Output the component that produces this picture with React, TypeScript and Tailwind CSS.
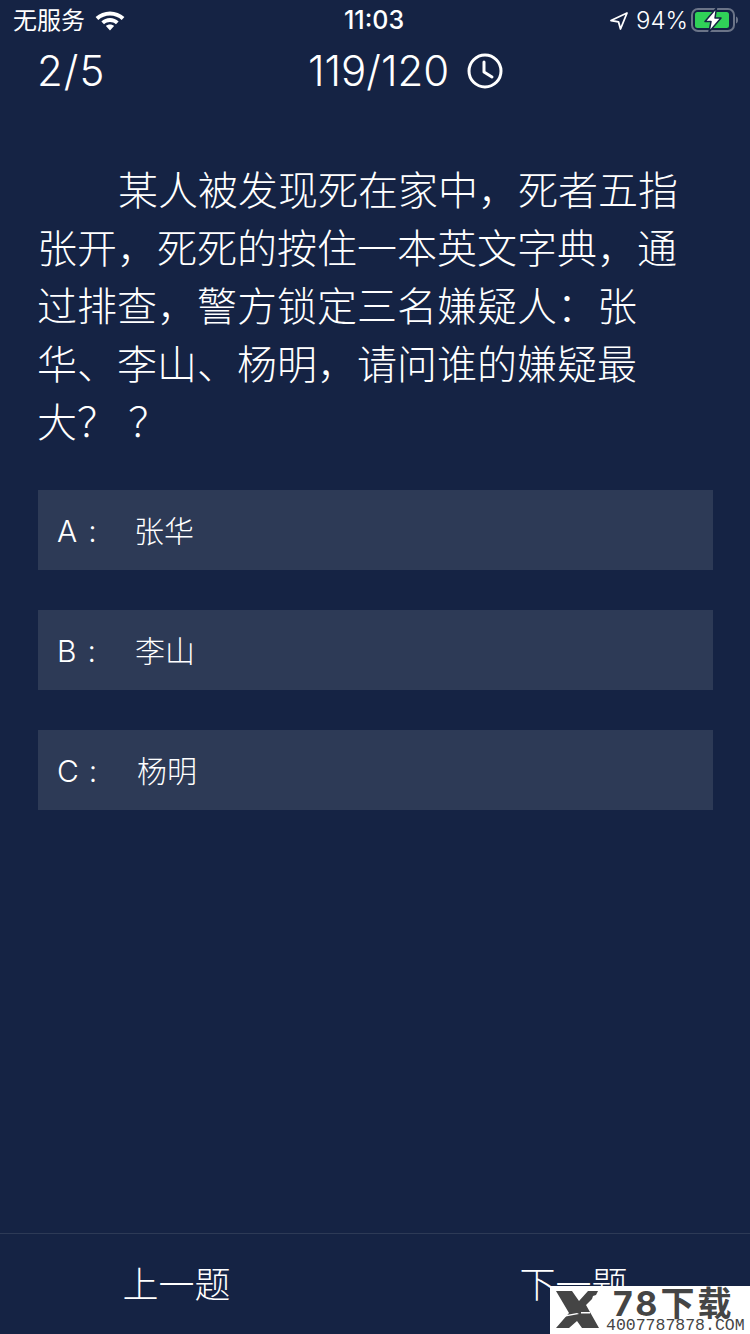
const cjk = "font-['Inter','Noto_Sans_CJK_SC',sans-serif]";

function Wifi() {
  return (
    <svg width="32" height="24" viewBox="0 0 30 22" fill="#fff">
      <path d="M15 2C9.800 2 5.200 4 1.500 7.300L4 10c3-2.700 6.800-4.200 11-4.200s8 1.500 11 4.200l2.500-2.700C24.800 4 20.200 2 15 2z" />
      <path d="M15 8.300c-3.100 0-5.900 1.200-8.100 3.100l2.500 2.700c1.500-1.300 3.500-2.100 5.600-2.100s4.100.8 5.600 2.100l2.500-2.700c-2.200-1.900-5-3.100-8.100-3.100z" />
      <path d="M15 14.200c-1.500 0-2.800.5-3.800 1.400L15 19.800l3.800-4.200c-1-.9-2.300-1.400-3.800-1.400z" />
    </svg>
  );
}

function Battery() {
  return (
    <svg width="48" height="25" viewBox="0 0 48 25">
      <rect x="1" y="1" width="42" height="22" rx="6" fill="none" stroke="#6b7488" strokeWidth="2" />
      <rect x="4" y="4" width="34" height="16" rx="2.500" fill="#30d158" />
      <path d="M45 8.500c1.400.4 2 1.800 2 3.500s-.6 3.100-2 3.500z" fill="#6b7488" />
      <path d="M25.500 0 14 13.500h6L18 24l12-14h-6z" fill="#fff" stroke="#152344" strokeWidth="1.500" strokeLinejoin="round" />
    </svg>
  );
}

function Arrow() {
  return (
    <svg width="20" height="20" viewBox="0 0 20 20" fill="none" stroke="#fff" strokeWidth="1.800" strokeLinejoin="round">
      <path d="M18 2 2 9.500l7.500 1.300L11.500 18z" />
    </svg>
  );
}

function Clock() {
  return (
    <svg width="36" height="36" viewBox="0 0 36 36" fill="none" stroke="#fff" strokeWidth="3" strokeLinecap="round" strokeLinejoin="round">
      <circle cx="18" cy="18" r="16" />
      <path d="M17 9v10l8 5" />
    </svg>
  );
}

function LogoX() {
  return (
    <svg width="44" height="38" viewBox="0 0 44 38" fill="#454545" className="mt-[1px]">
      <path d="M1 0h16l7 10 9-10h10l-2 4-3 1-1 3-6 6 13 23H27l-5-7-8 7H1l13-15z" />
      <path d="M6 25l16-3 2 1-16 3zM26 21h9v1.500h-9z" fill="#fff" />
    </svg>
  );
}

const options = [
  { k: "A", v: "张华", w: "w-[77px]", c: "ml-[11px]" },
  { k: "B", v: "李山", w: "w-[78px]", c: "ml-[11px]" },
  { k: "C", v: "杨明", w: "w-[80px]", c: "ml-[10px]" },
];

export default function App() {
  return (
    <div className={`relative flex h-[1334px] w-[750px] flex-col overflow-hidden bg-[#152344] text-white ${cjk}`}>
      <div className="flex h-[40px] items-center justify-between pl-[13px] pr-[11px] pt-[1px] text-[24px] leading-none">
        <div className="flex w-[200px] items-center gap-[9px]">
          <span>无服务</span>
          <Wifi />
        </div>
        <span className="-ml-[4px] text-[25px] font-medium">11:03</span>
        <div className="flex w-[200px] items-center justify-end gap-[8px]">
          <Arrow />
          <span className="-ml-[1px] font-light">94%</span>
          <div className="-ml-[5px]"><Battery /></div>
        </div>
      </div>

      <div className="flex h-[62px] items-center pl-[37px] pr-[37px] text-[42px] font-light leading-none">
        <span className="w-[271px] tracking-[1px]">2/5</span>
        <span>119/120</span>
        <div className="ml-[18px]"><Clock /></div>
      </div>

      <div className="mt-[60px] pl-[38px] pr-[37px] text-[40px] font-light leading-[58px]">
        <p className="-ml-[1px] indent-[81px]">某人被发现死在家中，死者五指张开，死死的按住一本英文字典，通过排查，警方锁定三名嫌疑人：张华、李山、杨明，请问谁的嫌疑最大？ ？</p>
      </div>

      <div className="mt-[38px] flex flex-col gap-[40px] pl-[38px] pr-[37px]">
        {options.map((o) => (
          <div key={o.k} className="flex h-[80px] items-center bg-[#2d3a56] pl-[19px] pt-[3px] text-[30px] font-light">
            <span className={`flex ${o.w}`}>
              <span>{o.k}</span>
              <span className={o.c}>:</span>
            </span>
            <span>{o.v}</span>
          </div>
        ))}
      </div>

      <div className="mt-auto flex h-[101px] items-center border-t border-[#2d3a56] pt-[2px] text-[36px] font-light">
        <div className="flex w-[353px] justify-center">上一题</div>
        <div className="flex w-[397px] justify-center pl-[44px]">下一题</div>
      </div>

      <div className="absolute bottom-0 right-0 flex h-[48px] w-[200px] items-start bg-white pl-[5px] pt-[4px] text-[#454545]">
        <LogoX />
        <div className="ml-[7px] flex flex-col">
          <span className="ml-[7px] text-[34px] font-bold leading-[28px] tracking-[3px]">78下载</span>
          <span className="font-['Liberation_Mono',monospace] text-[16.500px] leading-[16px]">4007787878.COM</span>
        </div>
      </div>
    </div>
  );
}
